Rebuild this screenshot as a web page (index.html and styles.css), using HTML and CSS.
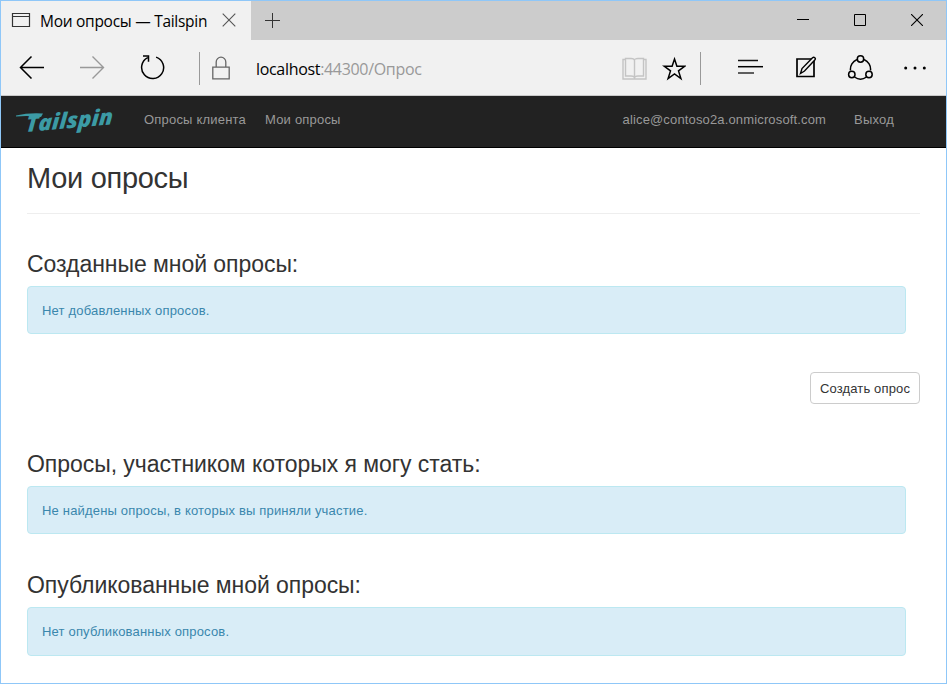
FILE: index.html
```html
<!DOCTYPE html>
<html lang="ru">
<head>
<meta charset="utf-8">
<title>Мои опросы — Tailspin</title>
<link rel="stylesheet" href="styles.css">
</head>
<body>
<div class="window">
  <header class="titlebar">
    <div class="tab">
      <svg class="tab-icon" width="20" height="16" viewBox="0 0 20 16"><path d="M1.5 2.500h17v13h-17zM1.5 5.500h17" fill="none" stroke="#333" stroke-width="1.2"/></svg>
      <span class="tab-title">Мои опросы — Tailspin</span>
      <svg class="tab-close" width="14" height="14" viewBox="0 0 14 14"><path d="M.7.7l12.6 12.6M13.3.7L.7 13.3" stroke="#555" stroke-width="1.1"/></svg>
    </div>
    <svg class="new-tab" width="15" height="15" viewBox="0 0 15 15"><path d="M7.5 0v15M0 7.5h15" stroke="#333"/></svg>
    <div class="controls">
      <svg width="12" height="12" viewBox="0 0 12 12"><path d="M0 5.5h12" stroke="#000"/></svg>
      <svg width="12" height="12" viewBox="0 0 12 12"><path d="M.5.5h11v11H.5z" fill="none" stroke="#000"/></svg>
      <svg width="12" height="12" viewBox="0 0 12 12"><path d="M0 0l12 12M12 0L0 12" stroke="#000" stroke-width="1.1"/></svg>
    </div>
  </header>
  <div class="toolbar">
    <svg class="back" width="26" height="24" viewBox="0 0 26 24"><path d="M25 12.500H1.500M12.500 1.500L1.500 12.500l11 11" fill="none" stroke="#000" stroke-width="1.500"/></svg>
    <svg class="forward" width="26" height="24" viewBox="0 0 26 24"><path d="M1 12.500h23.500M13.500 1.500l11 11-11 11" fill="none" stroke="#999" stroke-width="1.400"/></svg>
    <svg class="reload" width="26" height="26" viewBox="0 0 26 26"><path d="M17.100 3.100A11 11 0 1 1 8.700 3.700M4 2H9.500v5.800" fill="none" stroke="#000" stroke-width="1.500"/></svg>
    <i class="divider"></i>
    <svg class="lock" width="18" height="24" viewBox="0 0 18 24"><path d="M.8 11.200h16.400v11.600H.8zM4.200 11V6a4.800 4.800 0 0 1 9.600 0v5" fill="none" stroke="#666" stroke-width="1.300"/></svg>
    <span class="address">localhost<span class="path">:44300/Опрос</span></span>
    <svg class="book" width="25" height="23" viewBox="0 0 25 23"><path d="M3.500 2.500H1v19.500h23V2.500h-2.500M3.500 19V1.500h5.500Q12.500 1.500 12.500 3.500Q12.500 1.500 16 1.500h5.500V19H16Q12.500 19 12.500 21Q12.500 19 9 19zM12.500 3.500v18" fill="none" stroke="#c4c4c4" stroke-width="1.400"/></svg>
    <svg class="star" width="24" height="25" viewBox="0 0 24 25"><path d="M12.500 3l2.400 7.200h8l-6.400 4.700 2.400 7.700-6.400-4.700-6.400 4.700 2.400-7.700-6.400-4.700h8z" fill="none" stroke="#000" stroke-width="1.500"/></svg>
    <i class="divider second"></i>
    <svg class="hub" width="26" height="16" viewBox="0 0 26 16"><path d="M0 1.500h20" stroke="#111" stroke-width="1.500"/><path d="M0 7.700h25" stroke="#000" stroke-width="1.500"/><path d="M0 14h16" stroke="#444" stroke-width="1.700"/></svg>
    <svg class="note" width="22" height="22" viewBox="0 0 22 22"><path d="M19 7v13.500H2V3H19z" fill="none" stroke="#000" stroke-width="1.700"/><path d="M5.500 17.500l1.500-5L17.500 1.700q1.200-1 2.300 0t0 2.300L9.500 15z" fill="#f1f1f1" stroke="#000" stroke-width="1.400"/></svg>
    <svg class="share" width="26" height="27" viewBox="0 0 26 27"><g fill="none" stroke="#000" stroke-width="1.500"><path d="M10 5.500A10.500 10.500 0 0 0 3.500 16.500M17 5.500A10.500 10.500 0 0 1 23.500 16.500M7.500 23Q13.500 27.500 19.500 23"/><circle cx="13.500" cy="5" r="3.200"/><circle cx="4.800" cy="20.500" r="3.200"/><circle cx="22" cy="20.500" r="3.200"/></g></svg>
    <svg class="more" width="22" height="4" viewBox="0 0 22 4"><circle cx="1.700" cy="2" r="1.500"/><circle cx="11" cy="2" r="1.500"/><circle cx="20.300" cy="2" r="1.500"/></svg>
  </div>
  <nav class="navbar">
    <svg class="logo" width="104" height="38" viewBox="0 0 104 38"><g fill="#3c9ba5"><path d="M1 15.500Q14 12.500 28 13.500L26 17Q14 15.500 1 16.500z"/><text transform="translate(10.500 32) skewY(-5) skewX(-4)" textLength="87" lengthAdjust="spacingAndGlyphs">Tailspin</text></g></svg>
    <a class="clients">Опросы клиента</a>
    <a class="mine">Мои опросы</a>
    <span class="user">alice@contoso2a.onmicrosoft.com</span>
    <a class="logout">Выход</a>
  </nav>
  <main>
    <h1>Мои опросы</h1>
    <section>
      <h2>Созданные мной опросы:</h2>
      <div class="alert">Нет добавленных опросов.</div>
      <div class="actions"><button>Создать опрос</button></div>
    </section>
    <section class="joined">
      <h2>Опросы, участником которых я могу стать:</h2>
      <div class="alert">Не найдены опросы, в которых вы приняли участие.</div>
    </section>
    <section class="published">
      <h2>Опубликованные мной опросы:</h2>
      <div class="alert">Нет опубликованных опросов.</div>
    </section>
  </main>
</div>
</body>
</html>
```
FILE: styles.css
```css
* { box-sizing: border-box; }
body { margin: 0; }
svg { display: block; flex: none; }
.window {
  width: 947px;
  height: 684px;
  border: 1px solid #8fc7f8;
  background: #fff;
  overflow: hidden;
  font-family: "Liberation Sans", Arial, sans-serif;
  color: #333;
}
.titlebar { display: flex; height: 39px; background: #ccc; }
.tab { display: flex; width: 250px; background: #f1f1f1; padding-left: 10px; }
.tab-icon { margin-top: 10px; }
.tab-title {
  width: 168px;
  margin: 8px 0 0 9px;
  font: 15.5px/24px "Open Sans", "Noto Sans", sans-serif;
  letter-spacing: -0.28px;
  color: #000;
  white-space: nowrap;
}
.tab-close { margin: 12px 0 0 14px; }
.new-tab { margin: 12px 0 0 14px; }
.controls { display: flex; gap: 45px; margin: 13px 23px 0 auto; }
.toolbar {
  display: flex;
  height: 56px;
  background: #f1f1f1;
  border-bottom: 1px solid #c9c9c9;
}
.back { margin: 15px 0 0 18px; }
.forward { margin: 15px 0 0 34px; }
.reload { margin: 14px 0 0 34px; }
.divider { width: 1px; height: 33px; margin: 12px 0 0 34px; background: #999; }
.lock { margin: 16px 0 0 12px; }
.address {
  width: 366px;
  margin: 17px 0 0 26px;
  font: 16px/24px "Open Sans", "Noto Sans", sans-serif;
  letter-spacing: -0.32px;
  color: #000;
  white-space: nowrap;
}
.path { color: #999; }
.book { margin-top: 17px; }
.star { margin: 16px 0 0 15px; }
.divider.second { margin-left: 14px; }
.hub { margin: 19px 0 0 37px; }
.note { margin: 16px 0 0 31px; }
.share { margin: 14px 0 0 30px; }
.more { margin: 26px 0 0 31px; }
.navbar {
  display: flex;
  height: 52px;
  background: #222;
  border-bottom: 1px solid #000;
  color: #999;
  font-size: 13px;
  line-height: 18px;
  white-space: nowrap;
}
.navbar a, .navbar span { margin-top: 15px; letter-spacing: 0.2px; }
.navbar .logo { margin: 4px 0 0 14px; }
.logo text { font: italic 800 22px "Open Sans", sans-serif; }
.navbar .clients { width: 102px; margin-left: 25px; }
.navbar .mine { margin-left: 19px; }
.navbar .user { margin-left: auto; letter-spacing: 0.15px; }
.navbar .logout { margin: 15px 52px 0 28px; }
main { padding: 0 26px; }
h1, h2 { margin: 0; font-weight: 400; white-space: nowrap; }
h1 {
  height: 66px;
  padding-top: 13px;
  border-bottom: 1px solid #eee;
  font-size: 29px;
  line-height: 34px;
  letter-spacing: -0.3px;
}
h2 {
  height: 35px;
  font-size: 23px;
  line-height: 26px;
  letter-spacing: -0.05px;
}
section { padding-top: 37px; }
.alert {
  width: 879px;
  height: 48px;
  padding: 15px 14px;
  border: 1px solid #bce8f1;
  border-radius: 4px;
  background: #d9edf7;
  color: #3a87ad;
  font-size: 13px;
  line-height: 18px;
  letter-spacing: 0.18px;
}
.actions { display: flex; justify-content: flex-end; padding: 38px 0 9px; }
button {
  width: 110px;
  height: 32px;
  padding: 1px 0 0;
  border: 1px solid #ccc;
  border-radius: 4px;
  background: #fff;
  color: #333;
  font: 13px/18px "Liberation Sans", Arial, sans-serif;
  letter-spacing: 0.15px;
}
.joined, .published { padding-top: 38px; }
.published .alert { height: 49px; }
```
